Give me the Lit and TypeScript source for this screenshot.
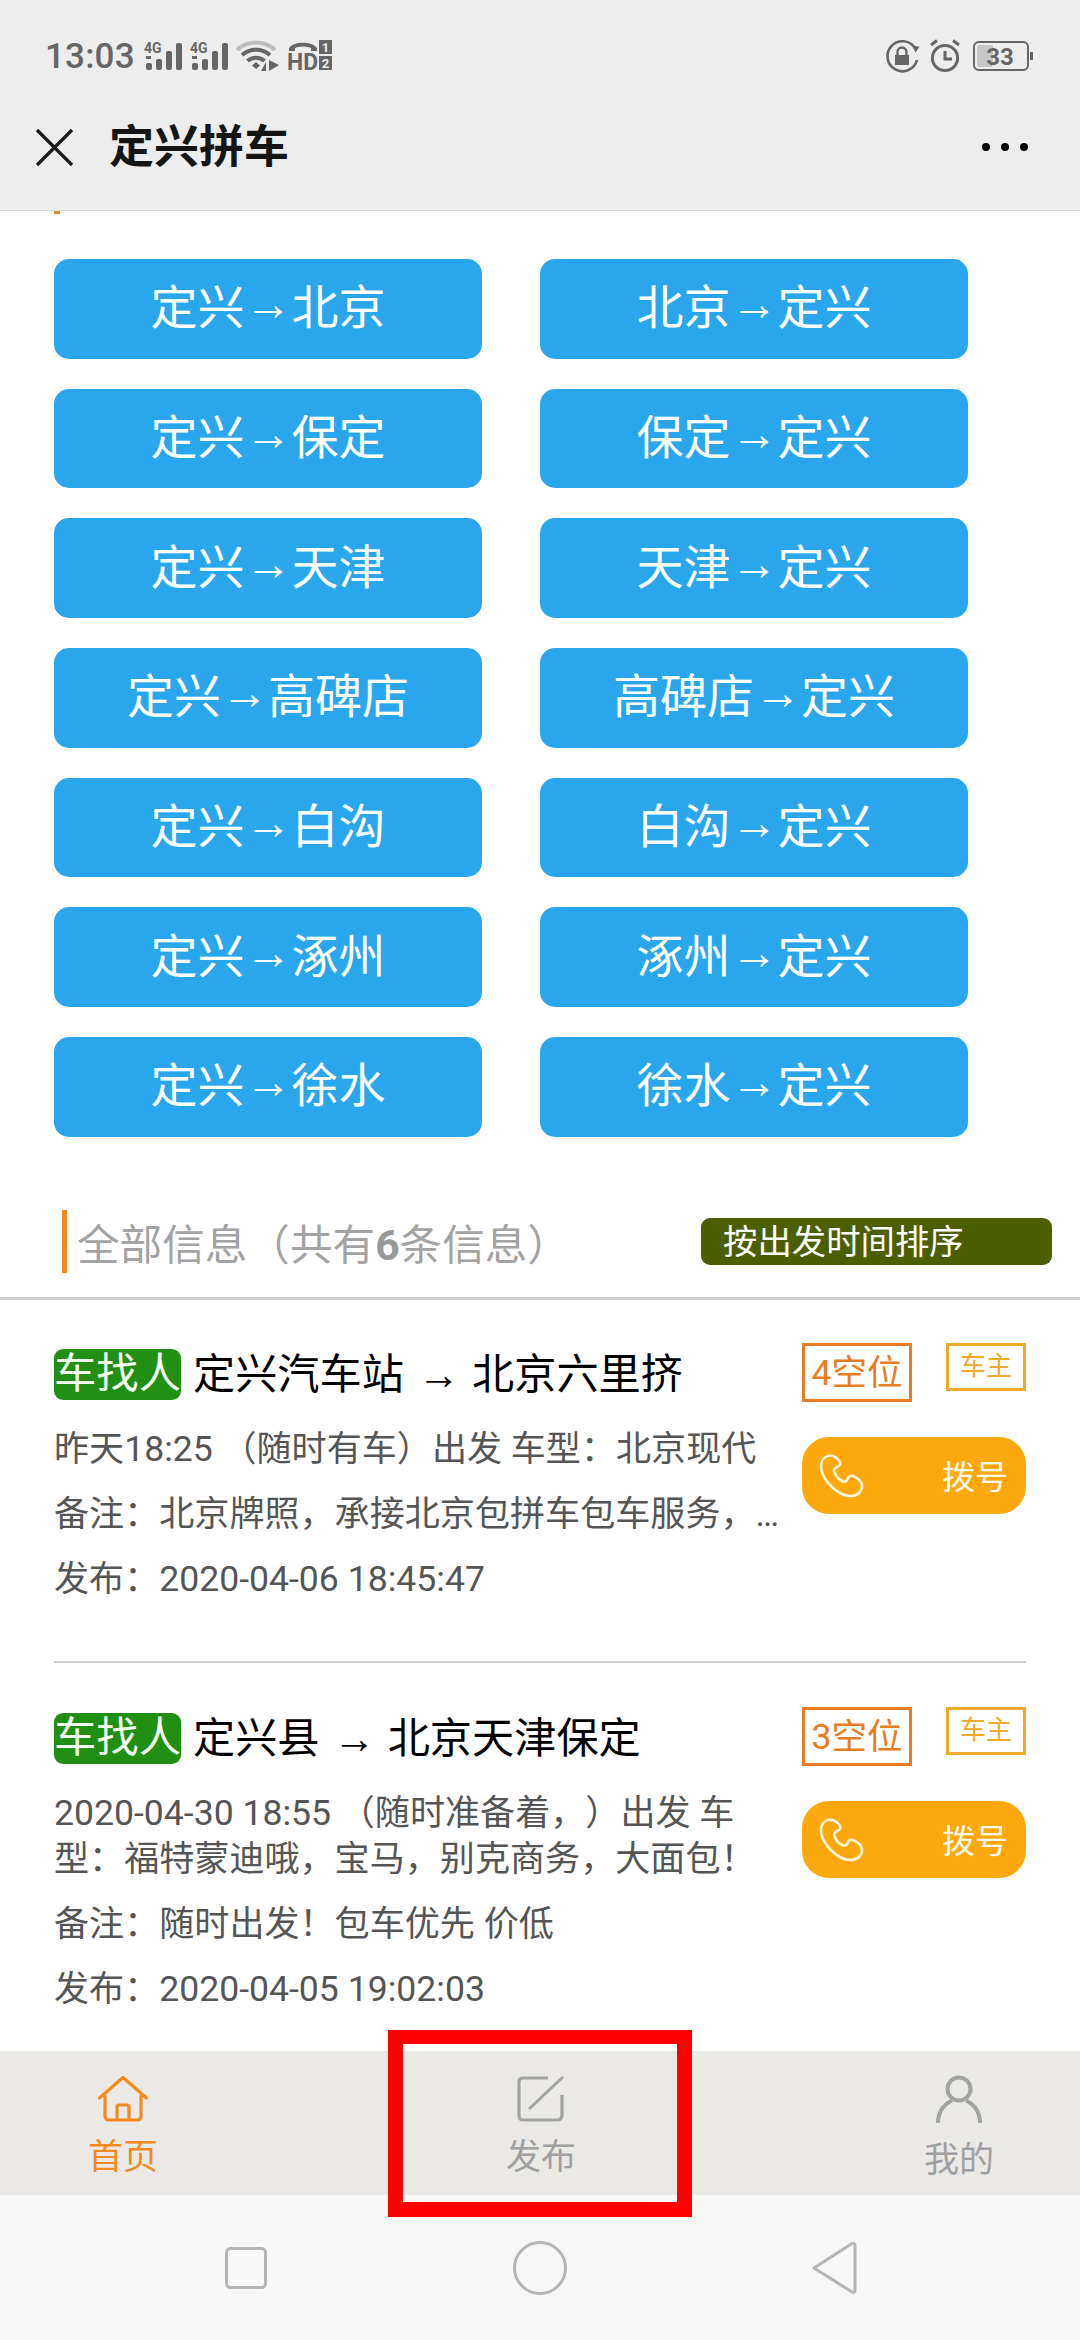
import { LitElement, html, css, svg } from "lit";
import { customElement } from "lit/decorators.js";

const routes = ["北京", "保定", "天津", "高碑店", "白沟", "涿州", "徐水"];

const num = (t: string) => html`<span class="num">${t}</span>`;

const cards = [
  {
    from: "定兴汽车站",
    to: "北京六里挤",
    seats: "4空位",
    lines: [
      html`昨天${num("18:25")} （随时有车）出发 车型：北京现代`,
      html`备注：北京牌照，承接北京包拼车包车服务，…`,
      html`发布：${num("2020-04-06 18:45:47")}`,
    ],
  },
  {
    from: "定兴县",
    to: "北京天津保定",
    seats: "3空位",
    lines: [
      html`${num("2020-04-30 18:55")} （随时准备着，）出发 车型：福特蒙迪哦，宝马，别克商务，大面包！`,
      html`备注：随时出发！包车优先 价低`,
      html`发布：${num("2020-04-05 19:02:03")}`,
    ],
  },
];

const signal = html`<svg class="sig" width="38" height="30" viewBox="0 0 38 30">
  <text x="0" y="12" font-family="Roboto" font-weight="700" font-size="14" fill="#666">4G</text>
  <rect x="2" y="22" width="6" height="7" rx="2" fill="#666"/>
  <rect x="2" y="15" width="5" height="3" fill="#666"/>
  <rect x="12" y="18" width="6" height="11" rx="2" fill="#666"/>
  <rect x="22" y="10" width="6" height="19" rx="2" fill="#666"/>
  <rect x="32" y="2" width="6" height="27" rx="2" fill="#666"/>
</svg>`;

const phone = svg`<path d="M8 2C4 3 1 7 1 12 1 24 16 42 31 42 37 42 42 38 42 32 42 28 38 24 33 22 30 21 28 23 27 26 26 28 24 28 22 27 18 25 15 20 14 17 14 15 15 14 17 13 20 12 21 10 20 8 18 4 13 1 8 2Z" fill="none" stroke="#fff6dc" stroke-width="2.6" stroke-linejoin="round"/>`;

@customElement("app-root")
export class AppRoot extends LitElement {
  static styles = css`
    :host {
      display: block;
      width: 1080px;
      height: 2340px;
      font-family: Roboto, "Noto Sans CJK SC", sans-serif;
      text-spacing-trim: space-all;
      background: #fff;
    }
    svg { overflow: visible; }
    .page {
      position: relative;
      width: 1080px;
      height: 2340px;
      display: flex;
      flex-direction: column;
      overflow: hidden;
    }
    .top {
      height: 210px;
      flex: none;
      background: #ededed;
      border-bottom: 1px solid #dcdcdc;
    }
    .status {
      height: 112px;
      padding: 0 47px 0 45px;
      box-sizing: border-box;
      display: flex;
      align-items: center;
      color: #666;
    }
    .time {
      font-size: 35px;
      font-weight: 500;
      color: #666;
      width: 99px;
      letter-spacing: 0.2px;
    }
    .sig { margin-right: 8px; }
    .wifi { margin-right: 8px; }
    .spacer { flex: 1; }
    .lock { margin-right: 11px; }
    .alarm { margin-right: 13px; }
    .appbar {
      height: 98px;
      padding: 0 52px 28px 36px;
      box-sizing: border-box;
      display: flex;
      align-items: center;
    }
    .apptitle {
      margin-left: 36px;
      padding-bottom: 7px;
      font-size: 45px;
      font-weight: 700;
      color: #151515;
      flex: 1;
    }
    .dots { display: flex; gap: 11px; }
    .dots i {
      width: 8px;
      height: 8px;
      border-radius: 50%;
      background: #000;
    }
    .content { flex: 1; min-height: 0; overflow: hidden; }
    .mark {
      width: 6px;
      height: 3px;
      margin-left: 54px;
      background: #ee8a22;
    }
    .routes {
      margin: 45px 112px 0 54px;
      display: grid;
      grid-template-columns: 428px 428px;
      column-gap: 58px;
      row-gap: 30px;
    }
    .route {
      height: 99.67px;
      box-sizing: border-box;
      padding-bottom: 10px;
      border-radius: 15px;
      background: #2aa7ec;
      color: #fff;
      font-size: 47px;
      display: flex;
      align-items: center;
      justify-content: center;
    }
    .arrow { font-family: "Liberation Sans", sans-serif; }
    .section {
      margin-top: 73px;
      padding: 0 28px 24px 62px;
      display: flex;
      align-items: center;
      border-bottom: 3px solid #cfcfcf;
    }
    .stitle {
      flex: 1;
      height: 63px;
      border-left: 5px solid #ee8a1e;
      padding-left: 10px;
      font-size: 42.6px;
      line-height: 70px;
      color: #a3a3a3;
    }
    .stitle b { color: #999; }
    .sort {
      width: 351px;
      height: 47px;
      box-sizing: border-box;
      padding-left: 22px;
      border-radius: 9px;
      background: #4c5f00;
      color: #fff;
      font-size: 34.4px;
      line-height: 49px;
    }
    .card {
      margin: 0 54px;
      padding: 43px 0 59px;
      display: grid;
      grid-template-columns: 726px 224px;
      column-gap: 22px;
      border-bottom: 2px solid #cfcfcf;
    }
    .card:last-child { border-bottom: none; padding-top: 44px; }
    .left { display: flex; flex-direction: column; }
    .title {
      margin: 6px 0 7px;
      height: 51px;
      display: flex;
      align-items: center;
      font-size: 42.2px;
      color: #000;
    }
    .route-text { white-space: pre; padding-bottom: 8px; }
    .route-text .arrow { margin: 0 2px 0 3px; }
    .badge {
      width: 127px;
      height: 51px;
      border-radius: 9px;
      background: #218e14;
      color: #f4fff0;
      font-size: 42.3px;
      line-height: 49px;
      text-align: center;
      white-space: nowrap;
      margin-right: 12px;
      flex: none;
    }
    .line {
      margin: 19px 0 0;
      font-size: 35.1px;
      line-height: 46px;
      color: #555;
    }
    .num { font-size: 35.6px; }
    .top-row { display: flex; justify-content: space-between; align-items: flex-start; }
    .seats {
      width: 110px;
      height: 59px;
      box-sizing: border-box;
      border: 3px solid #e87c22;
      color: #e87c22;
      font-size: 35.5px;
      line-height: 55px;
      text-align: center;
    }
    .role {
      width: 80px;
      height: 48px;
      box-sizing: border-box;
      border: 3px solid #eeaa2a;
      color: #eeaa2a;
      font-size: 26px;
      line-height: 40px;
      text-align: center;
    }
    .call {
      margin-top: 35px;
      height: 77px;
      border-radius: 27px;
      background: #fda90d;
      display: flex;
      align-items: center;
      padding: 0 18px;
      color: #fff8ea;
      font-size: 33px;
    }
    .call span { margin-left: auto; }
    .tabs {
      height: 144px;
      flex: none;
      background: #ebe9e6;
      padding: 0 51px 0 53px;
      display: flex;
      justify-content: space-between;
    }
    .tab {
      width: 140px;
      display: flex;
      flex-direction: column;
      align-items: center;
      font-size: 35px;
      line-height: 40px;
      color: #a0a0a0;
      padding-top: 24px;
    }
    .tab svg { display: block; height: 48px; }
    .tab span { margin-top: 15px; }
    .tab.on { color: #f5891e; }
    .tab.me span { margin-top: 18px; }
    .sysnav {
      height: 145px;
      flex: none;
      background: #f7f7f7;
      padding: 0 216px;
      display: flex;
      justify-content: space-between;
      align-items: center;
    }
    .redbox {
      position: absolute;
      left: 388px;
      top: 2030px;
      width: 304px;
      height: 187px;
      box-sizing: border-box;
      border: 15px solid #ff0000;
      border-top-width: 14px;
    }
  `;

  private arrow() {
    return html`<span class="arrow">→</span>`;
  }

  private renderStatus() {
    return html`<div class="status">
      <span class="time">13:03</span>
      ${signal}${signal}
      <svg class="wifi" width="43" height="30" viewBox="0 0 43 30">
        <path d="M1 9C12 -1 28 -1 39 9" fill="none" stroke="#bdbdbd" stroke-width="4"/>
        <path d="M6 14C14 7 26 7 34 14" fill="none" stroke="#666" stroke-width="4"/>
        <path d="M11.500 20C16 15.500 24 15.500 28.500 20" fill="none" stroke="#666" stroke-width="4"/>
        <path d="M16 24.500L20 21 24 24.500 20 28Z" fill="#666"/>
        <path d="M30 30V21L25 30ZM33 19V30L43 24Z" fill="#666"/>
      </svg>
      <svg width="46" height="32" viewBox="0 0 46 32">
        <path d="M2 11V8C7 1 25 1 30 8V11H24V8C18 6 14 6 8 8V11Z" fill="#666"/>
        <text x="0" y="30" font-family="Roboto" font-weight="700" font-size="24" textLength="31" lengthAdjust="spacingAndGlyphs" fill="#666">HD</text>
        <rect x="32" y="0" width="13" height="14" fill="#666"/>
        <rect x="32" y="16" width="13" height="14" fill="#666"/>
        <text x="38.500" y="12" text-anchor="middle" font-family="Roboto" font-weight="700" font-size="13" fill="#ededed">1</text>
        <text x="38.500" y="28" text-anchor="middle" font-family="Roboto" font-weight="700" font-size="13" fill="#ededed">2</text>
      </svg>
      <div class="spacer"></div>
      <svg class="lock" width="33" height="33" viewBox="0 0 33 33">
        <path d="M31 20A15 15 0 1 1 29 8" fill="none" stroke="#666" stroke-width="2.600"/>
        <path d="M25 7L31 12 32 5Z" fill="#666" transform="rotate(25 29 9)"/>
        <rect x="9" y="15" width="14" height="10" fill="#666"/>
        <path d="M11.500 15V12A4.500 4.500 0 0 1 20.500 12V15" fill="none" stroke="#666" stroke-width="2.400"/>
      </svg>
      <svg class="alarm" width="30" height="34" viewBox="0 0 30 34">
        <circle cx="15" cy="19" r="12.600" fill="none" stroke="#666" stroke-width="3"/>
        <path d="M15 12V20H22" fill="none" stroke="#666" stroke-width="3"/>
        <path d="M1 6L7 1.500M29 6L23 1.500" fill="none" stroke="#666" stroke-width="3"/>
      </svg>
      <svg width="60" height="30" viewBox="0 0 60 30">
        <rect x="1" y="1" width="54" height="28" rx="5" fill="none" stroke="#666" stroke-width="2"/>
        <rect x="4" y="4" width="16" height="22" rx="2" fill="#c6c6c6"/>
        <rect x="57" y="11" width="3" height="8" fill="#666"/>
        <text x="27" y="24" text-anchor="middle" font-family="Roboto" font-weight="700" font-size="24" fill="#666">33</text>
      </svg>
    </div>`;
  }

  private renderCard(c: (typeof cards)[number]) {
    return html`<div class="card">
      <div class="left">
        <div class="title">
          <span class="badge">车找人</span>
          <span class="route-text">${c.from} ${this.arrow()} ${c.to}</span>
        </div>
        ${c.lines.map((l) => html`<p class="line">${l}</p>`)}
      </div>
      <div>
        <div class="top-row">
          <div class="seats">${c.seats}</div>
          <div class="role">车主</div>
        </div>
        <div class="call">
          <svg width="43" height="43" viewBox="0 0 43 43">${phone}</svg>
          <span>拨号</span>
        </div>
      </div>
    </div>`;
  }

  render() {
    return html`<div class="page">
      <div class="top">
        ${this.renderStatus()}
        <div class="appbar">
          <svg width="37" height="37" viewBox="0 0 37 37">
            <path d="M1 1L36 36M36 1L1 36" stroke="#1a1a1a" stroke-width="3.200" fill="none"/>
          </svg>
          <div class="apptitle">定兴拼车</div>
          <div class="dots"><i></i><i></i><i></i></div>
        </div>
      </div>
      <div class="content">
        <div class="mark"></div>
        <div class="routes">
          ${routes.map(
            (r) => html`
              <div class="route">定兴${this.arrow()}${r}</div>
              <div class="route">${r}${this.arrow()}定兴</div>
            `
          )}
        </div>
        <div class="section">
          <div class="stitle">全部信息（共有<b>6</b>条信息）</div>
          <div class="sort">按出发时间排序</div>
        </div>
        ${cards.map((c) => this.renderCard(c))}
      </div>
      <div class="tabs">
        <div class="tab on">
          <svg width="50" height="46" viewBox="0 0 50 46">
            <path d="M1.500 22L25 1.500 48.500 22M7 20V40Q7 44 11 44H39Q43 44 43 40V20M19 44V31Q19 29 21 29H29Q31 29 31 31V44" fill="none" stroke="#f5891e" stroke-width="3.200" stroke-linejoin="round" stroke-linecap="round"/>
          </svg>
          <span>首页</span>
        </div>
        <div class="tab">
          <svg width="48" height="46" viewBox="0 0 48 46">
            <path d="M31 2H6Q2 2 2 6V39Q2 44 6 44H40Q45 44 45 39V19" fill="none" stroke="#a3a3a3" stroke-width="3.200"/>
            <path d="M12 33L46 1" fill="none" stroke="#a3a3a3" stroke-width="3"/>
          </svg>
          <span>发布</span>
        </div>
        <div class="tab me">
          <svg width="46" height="48" viewBox="0 0 46 48">
            <circle cx="23" cy="14" r="11.500" fill="none" stroke="#a3a3a3" stroke-width="4"/>
            <path d="M2 48C2 36 9 29 16 25.500M44 48C44 36 37 29 30 25.500" fill="none" stroke="#a3a3a3" stroke-width="4"/>
          </svg>
          <span>我的</span>
        </div>
      </div>
      <div class="sysnav">
        <svg width="60" height="54" viewBox="0 0 60 54">
          <rect x="10.500" y="7.500" width="39" height="39" rx="4" fill="none" stroke="#b5b5b5" stroke-width="3"/>
        </svg>
        <svg width="60" height="54" viewBox="0 0 60 54">
          <circle cx="30" cy="27" r="25.500" fill="none" stroke="#b5b5b5" stroke-width="3"/>
        </svg>
        <svg width="60" height="54" viewBox="0 0 60 54">
          <path d="M10 27L48 2.500Q51 1.500 51 5V49Q51 52 48 51Z" fill="none" stroke="#b5b5b5" stroke-width="3" stroke-linejoin="round"/>
        </svg>
      </div>
      <div class="redbox"></div>
    </div>`;
  }
}
